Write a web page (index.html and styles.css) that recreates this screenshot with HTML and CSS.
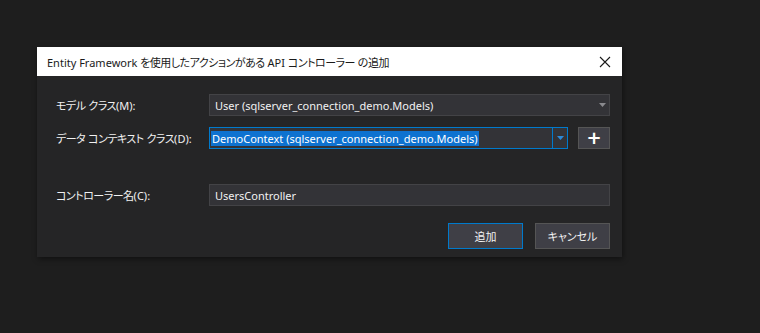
FILE: index.html
```html
<!DOCTYPE html>
<html lang="ja">
<head>
<meta charset="utf-8">
<link rel="stylesheet" href="styles.css">
</head>
<body>
<div class="dialog">
  <div class="titlebar">
    <span class="title">Entity Framework <span class="jp">を使用したアクションがある</span> API <span class="jp">コントローラー</span> <span class="jp">の追加</span></span>
    <svg class="close" width="12" height="12" viewBox="0 0 12 12"><path d="M1 1L11 11M11 1L1 11" stroke="#1a1a1a" stroke-width="1.1" fill="none"/></svg>
  </div>
  <div class="body">
    <div class="row">
      <label class="label"><span class="jp">モデル</span> <span class="jp">クラス</span>(M):</label>
      <div class="combo">
        <span class="value">User (sqlserver_connection_demo.Models)</span>
        <span class="arrow"><svg width="7" height="4" viewBox="0 0 7 4"><path d="M0 0H7L3.5 4Z" fill="#8a8a8e"/></svg></span>
      </div>
    </div>
    <div class="row row2">
      <label class="label"><span class="jp">データ</span> <span class="jp">コンテキスト</span> <span class="jp">クラス</span>(D):</label>
      <div class="combo focused">
        <span class="value"><span class="sel">DemoContext (sqlserver_connection_demo.Models)</span></span>
        <span class="arrow sep"><svg width="7" height="4" viewBox="0 0 7 4"><path d="M0 0H7L3.5 4Z" fill="#2d8ad8"/></svg></span>
      </div>
      <button class="plus">+</button>
    </div>
    <div class="row row3">
      <label class="label"><span class="jp">コントローラー名</span>(C):</label>
      <div class="text">UsersController</div>
    </div>
    <div class="buttons">
      <button class="btn default">追加</button>
      <button class="btn">キャンセル</button>
    </div>
  </div>
</div>
</body>
</html>
```
FILE: styles.css
```css
html, body {
  margin: 0;
  padding: 0;
  background: #1e1e1e;
  width: 760px;
  height: 333px;
  overflow: hidden;
  font-family: "Noto Sans", "Noto Sans CJK JP", sans-serif;
  font-size: 11px;
  font-feature-settings: "palt";
  color: #f1f1f1;
}
.dialog {
  margin: 47px 0 0 37px;
  width: 585px;
  height: 210px;
  background: #252526;
  box-shadow: 1px 2px 6px rgba(0, 0, 0, 0.45);
  display: flex;
  flex-direction: column;
}
.titlebar {
  height: 30px;
  background: #ffffff;
  color: #1a1a1a;
  display: flex;
  align-items: center;
  justify-content: space-between;
  padding: 0 9px 0 10px;
}
.title {
  font-size: 11px;
}
.jp {
  letter-spacing: -0.5px;
}
.close {
  margin-right: 2px;
}
.body {
  padding: 18px 12px 8px 19px;
  display: flex;
  flex-direction: column;
}
.row {
  display: flex;
  align-items: center;
  height: 22px;
}
.row2 { margin-top: 11px; }
.row3 { margin-top: 35px; }
.label {
  width: 153px;
  flex: none;
  white-space: nowrap;
  color: #f1f1f1;
}
.combo {
  flex: 1;
  height: 22px;
  box-sizing: border-box;
  background: #333337;
  border: 1px solid #434346;
  display: flex;
  align-items: center;
}
.combo .value {
  flex: 1;
  padding-left: 5px;
  white-space: nowrap;
  overflow: hidden;
}
.combo .arrow {
  width: 14px;
  height: 100%;
  display: flex;
  align-items: center;
  justify-content: center;
}
.combo.focused {
  border-color: #007acc;
  flex: none;
  width: 359px;
}
.combo.focused .value { padding-left: 1px; }
.combo .arrow.sep {
  border-left: 1px solid #007acc;
}
.sel {
  background: #0e72d0;
  color: #ffffff;
  padding: 2px 1px 3px 1px;
}
.plus {
  margin-left: 10px;
  width: 32px;
  height: 22px;
  box-sizing: border-box;
  background: #3f3f46;
  border: 1px solid #555555;
  color: #ffffff;
  font-family: "DejaVu Sans", sans-serif;
  font-size: 18px;
  font-weight: bold;
  line-height: 18px;
  padding: 0;
}
.text {
  flex: 1;
  height: 22px;
  box-sizing: border-box;
  background: #333337;
  border: 1px solid #434346;
  padding-left: 5px;
  display: flex;
  align-items: center;
}
.buttons {
  margin-top: 17px;
  display: flex;
  justify-content: flex-end;
  gap: 12px;
}
.btn {
  width: 75px;
  height: 26px;
  box-sizing: border-box;
  background: #3f3f46;
  border: 1px solid #555555;
  color: #f1f1f1;
  font-family: "Noto Sans", "Noto Sans CJK JP", sans-serif;
  font-feature-settings: "palt";
  font-size: 11px;
  padding: 0;
}
.btn.default {
  border-color: #007acc;
}
```
